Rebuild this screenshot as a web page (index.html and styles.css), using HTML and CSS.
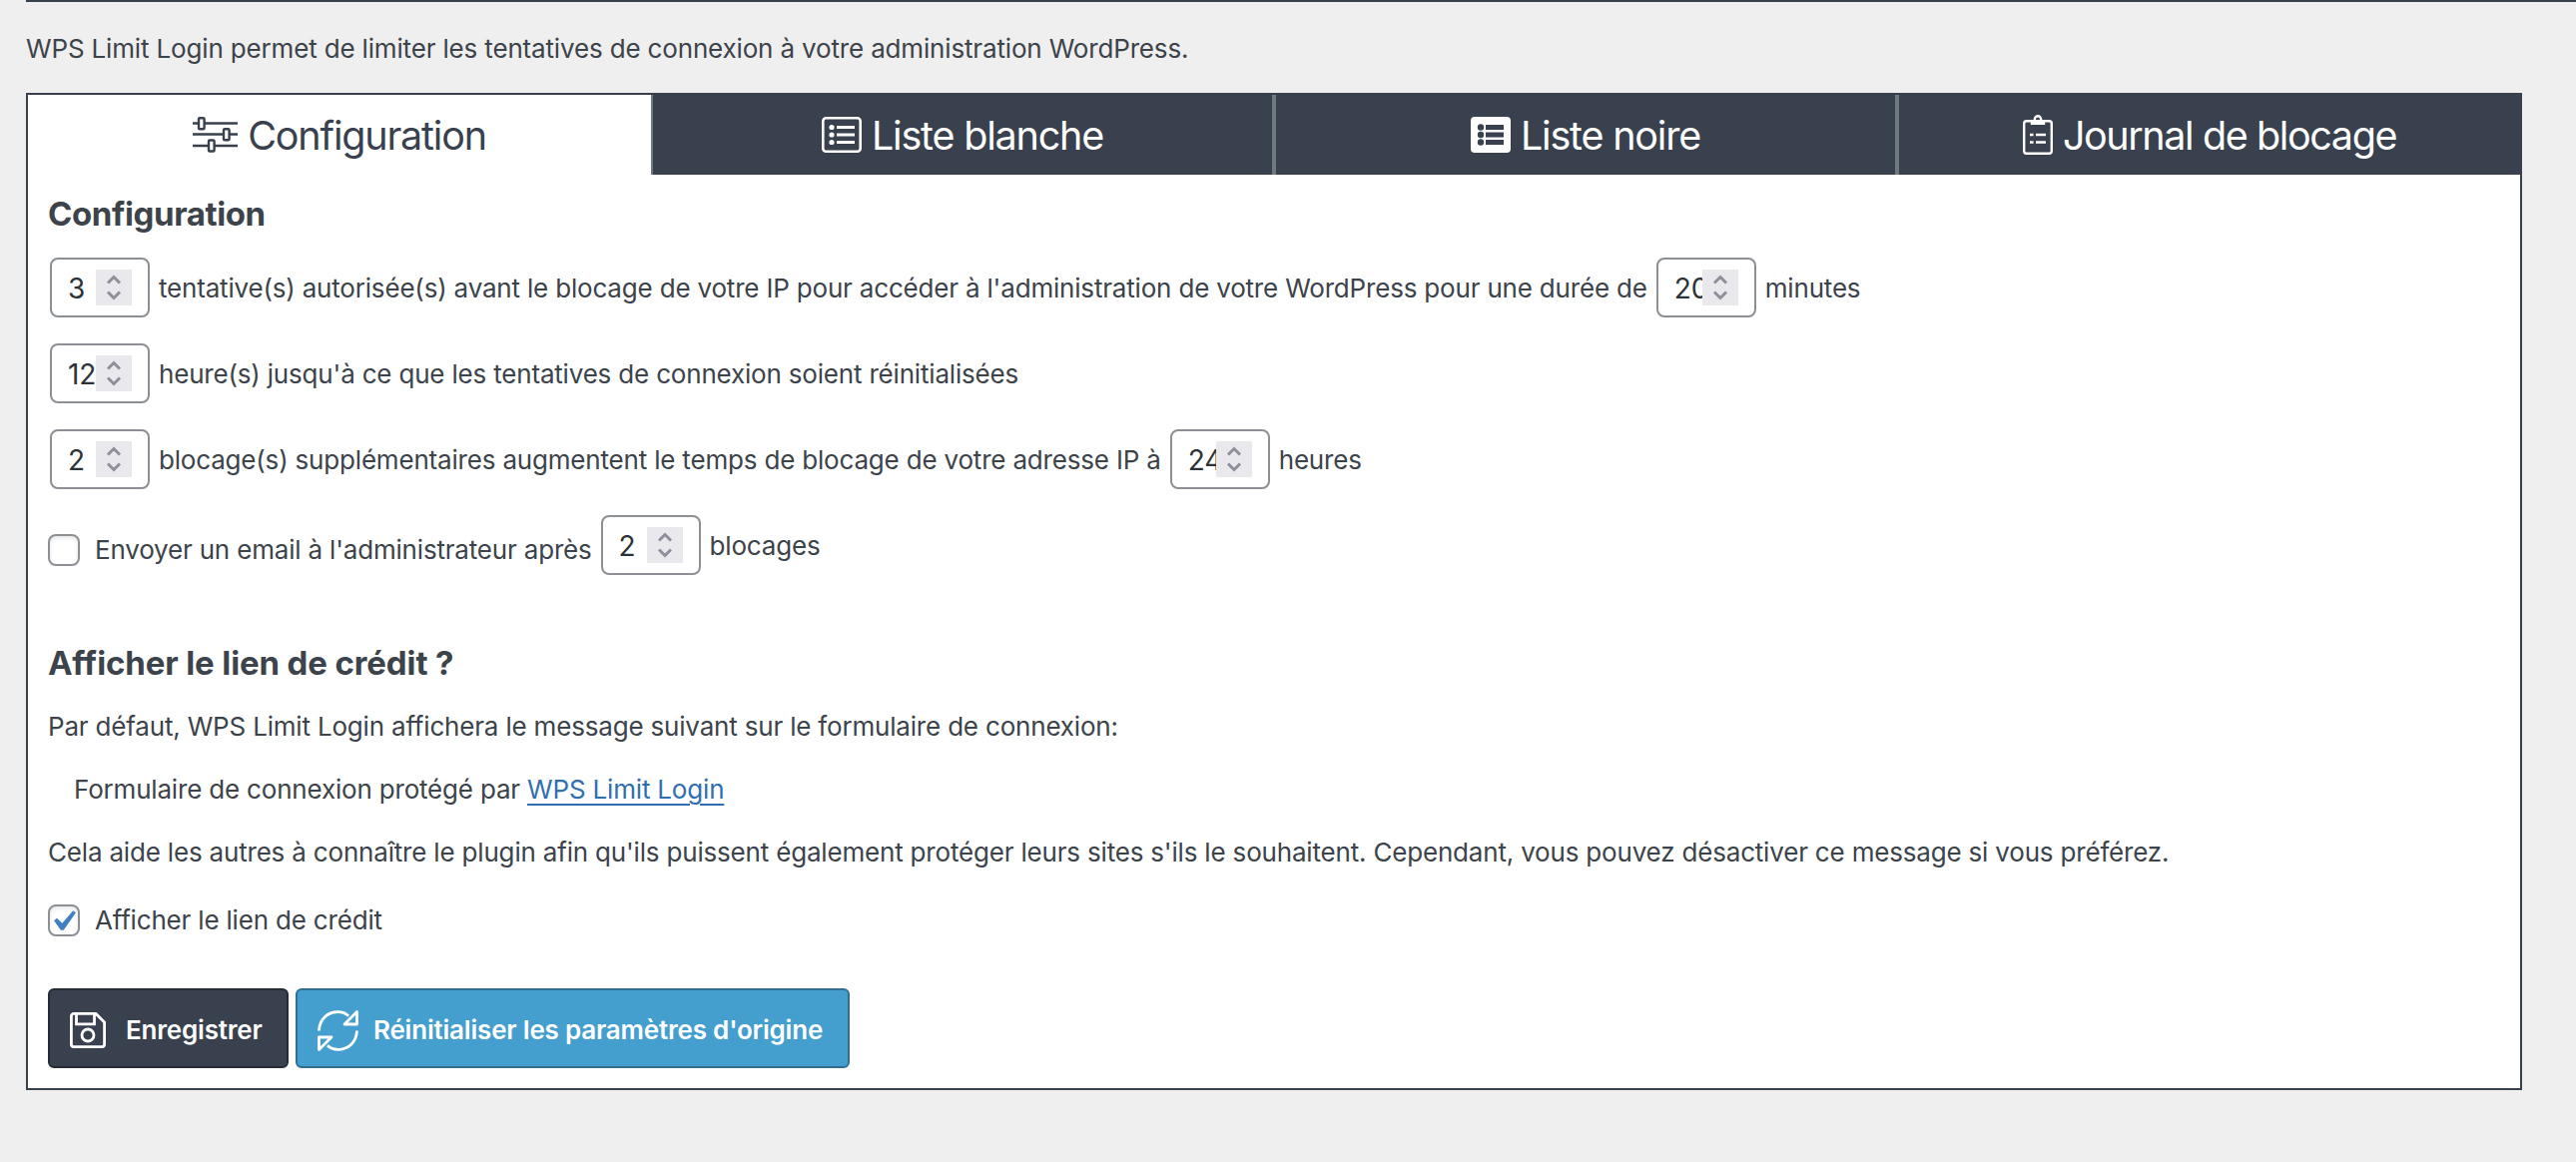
FILE: index.html
```html
<!DOCTYPE html>
<html lang="fr">
<head>
<meta charset="utf-8">
<title>WPS Limit Login</title>
<link rel="stylesheet" href="styles.css">
</head>
<body>
<svg class="defs" aria-hidden="true">
  <symbol id="spin" viewBox="0 0 36 36"><rect width="36" height="36" fill="#e9e8ed"/><path d="M12 13.500l6-6 6 6M12 22.500l6 6 6-6" fill="none" stroke="#8f8e9b" stroke-width="3"/></symbol>
</svg>
<main class="page">
  <p class="intro">WPS Limit Login permet de limiter les tentatives de connexion à votre administration WordPress.</p>
  <section class="panel">
    <nav class="tabs">
      <a class="tab active"><svg class="ic-config" viewBox="0 0 45 36" fill="none" stroke="currentColor" stroke-width="2.400"><path d="M0 6.500h6M12 6.500h33M0 17.500h31M37 17.500h8M0 29h16M22 29h23"/><rect x="6" y="1.200" width="5.600" height="11" rx="1"/><rect x="31" y="12.200" width="5.600" height="11" rx="1"/><rect x="16" y="23.500" width="5.600" height="11" rx="1"/></svg><span>Configuration</span></a>
      <a class="tab"><svg class="ic-list" viewBox="0 0 40 36"><rect x="1.300" y="1.300" width="37.400" height="33.400" rx="3" fill="none" stroke="currentColor" stroke-width="2.600"/><path d="M15 10.500h18M15 18h18M15 25.500h18" stroke="currentColor" stroke-width="3"/><g fill="currentColor"><circle cx="10" cy="10.500" r="2.600"/><circle cx="10" cy="18" r="2.600"/><circle cx="10" cy="25.500" r="2.600"/></g></svg><span>Liste blanche</span></a>
      <a class="tab"><svg class="ic-list" viewBox="0 0 40 36"><rect width="40" height="36" rx="4" fill="currentColor"/><g fill="#38414d"><path d="M15 8h18v5H15zM15 15.500h18v5H15zM15 23h18v5H15z"/><circle cx="10" cy="10.500" r="3.200"/><circle cx="10" cy="18" r="3.200"/><circle cx="10" cy="25.500" r="3.200"/></g></svg><span>Liste noire</span></a>
      <a class="tab journal"><svg class="ic-clip" viewBox="0 0 30 40" fill="none" stroke="currentColor" stroke-width="2.400"><rect x="1.200" y="6.200" width="27.600" height="32.600" rx="2.500"/><path d="M9 6.500v2.300h12V6.500z" fill="currentColor"/><circle cx="15" cy="4.500" r="3.200"/><path d="M13 20h10M13 27.500h10M7 20h3.600M7 27.500h3.600"/></svg><span>Journal de blocage</span></a>
    </nav>
    <form class="content">
      <h2 class="title first">Configuration</h2>
      <div class="row"><span class="num"><span class="val">3</span><svg class="spin"><use href="#spin"/></svg></span><span class="txt">tentative(s) autorisée(s) avant le blocage de votre IP pour accéder à l'administration de votre WordPress pour une durée de</span><span class="num"><span class="val">20</span><svg class="spin"><use href="#spin"/></svg></span><span class="txt">minutes</span></div>
      <div class="row"><span class="num"><span class="val">12</span><svg class="spin"><use href="#spin"/></svg></span><span class="txt">heure(s) jusqu'à ce que les tentatives de connexion soient réinitialisées</span></div>
      <div class="row"><span class="num"><span class="val">2</span><svg class="spin"><use href="#spin"/></svg></span><span class="txt">blocage(s) supplémentaires augmentent le temps de blocage de votre adresse IP à</span><span class="num"><span class="val">24</span><svg class="spin"><use href="#spin"/></svg></span><span class="txt">heures</span></div>
      <div class="row mail"><label class="option"><span class="check"></span><span>Envoyer un email à l'administrateur après</span></label><span class="num"><span class="val">2</span><svg class="spin"><use href="#spin"/></svg></span><span class="txt">blocages</span></div>
      <h2 class="title credit">Afficher le lien de crédit ?</h2>
      <p class="para">Par défaut, WPS Limit Login affichera le message suivant sur le formulaire de connexion:</p>
      <p class="para indent">Formulaire de connexion protégé par <a class="link">WPS Limit Login</a></p>
      <p class="para">Cela aide les autres à connaître le plugin afin qu'ils puissent également protéger leurs sites s'ils le souhaitent. Cependant, vous pouvez désactiver ce message si vous préférez.</p>
      <label class="option show"><span class="check"><svg class="tick" viewBox="0 0 20 20"><path d="M14.830 4.890l1.340.940-5.810 8.380H9.020L5.780 9.670l1.340-1.250 2.570 2.400z" fill="#3f7fc2"/></svg></span><span>Afficher le lien de crédit</span></label>
      <div class="actions">
        <button type="button" class="btn save"><svg class="ic-save" viewBox="0 0 36 36" fill="none" stroke="currentColor" stroke-width="2.800"><path d="M4 1.400h22l8.600 8.600V32a2.600 2.600 0 0 1-2.600 2.600H4A2.600 2.600 0 0 1 1.400 32V4A2.600 2.600 0 0 1 4 1.400z"/><path d="M6.500 2v9.800h18V2"/><circle cx="18" cy="23" r="6"/></svg><span>Enregistrer</span></button>
        <button type="button" class="btn reset"><svg class="ic-sync" viewBox="0 0 41 41" fill="none" stroke="currentColor" stroke-width="2.800" stroke-linejoin="round"><path d="M1.500 20.500C2 9 10 1.700 20.500 1.700c4.500 0 8 1.500 10.500 4M39.500 20.500C39 32 31 39.300 20.500 39.300c-4.500 0-8-1.500-10.500-4"/><path d="M39.500 1.500V14H27zM1.500 39.500V27H14z"/></svg><span>Réinitialiser les paramètres d'origine</span></button>
      </div>
    </form>
  </section>
</main>
</body>
</html>
```
FILE: styles.css
```css
* { box-sizing: border-box; }
body { margin: 0; background: #efefef; color: #3c434a; font: 26px/40px Inter, "Liberation Sans", sans-serif; letter-spacing: -0.185px; }
.defs { position: absolute; width: 0; height: 0; }
.page { min-height: 1164px; margin-left: 26px; border-top: 2px solid #38414d; padding-top: 27px; }
.intro { margin: 0 0 24px; height: 40px; white-space: nowrap; letter-spacing: -0.16px; }
.panel { width: 2500px; height: 999px; border: 2px solid #38414d; background: #fff; }
.tabs { display: grid; grid-template-columns: 626px 624px 624px 622px; height: 80px; }
.tab { display: flex; align-items: center; justify-content: center; gap: 10px; background: #38414d; color: #fff; font-size: 39.5px; letter-spacing: -1.2px; border-right: 4px solid #6f7980; white-space: nowrap; }
.tab span { padding-top: 2px; }
.tab.active { background: #fff; color: #38414d; border-right-width: 2px; }
.tab.journal { border-right: 0; letter-spacing: -1.4px; }
.ic-config { width: 45px; height: 36px; }
.ic-list { width: 40px; height: 36px; }
.ic-clip { width: 30px; height: 40px; }
.content { padding: 18px 20px 0; }
.title { margin: 0; font-size: 33px; line-height: 42px; font-weight: 650; letter-spacing: -0.12px; }
.first { margin-bottom: 23px; letter-spacing: -0.4px; }
.row { display: flex; align-items: center; height: 60px; margin: 0 2px 26px; gap: 9px; white-space: nowrap; }
.num { display: flex; align-items: center; width: 100px; height: 60px; border: 2px solid #8c8f94; border-radius: 8px; padding-left: 16px; color: #2c3338; font-size: 28px; flex: none; }
.val { width: 28px; overflow: hidden; padding-top: 2px; }
.txt { padding-top: 2px; }
.spin { width: 36px; height: 36px; flex: none; }
.option { display: flex; align-items: center; gap: 15px; }
.check { display: flex; align-items: flex-start; width: 32px; height: 32px; border: 2px solid #8c8f94; border-radius: 8px; background: #fff; box-shadow: inset 0 2px 4px rgba(0,0,0,.1); }
.tick { width: 42px; height: 42px; flex: none; margin: -6px 0 0 -8px; }
.mail { margin-left: 0; }
.mail .option { padding-top: 10px; }
.credit { margin: 67px 0 23px; }
.para { margin: 0 0 23px; white-space: nowrap; }
.indent { padding-left: 26px; }
.link { color: #2f6fb0; text-decoration: underline; text-decoration-thickness: 2px; text-underline-offset: 5px; }
.show { height: 40px; margin-top: 28px; }
.actions { display: flex; gap: 7px; margin-top: 48px; }
.btn { display: flex; align-items: center; height: 80px; border: 2px solid; border-radius: 6px; color: #fff; font: 600 26px/40px Inter, sans-serif; letter-spacing: -0.2px; white-space: nowrap; padding: 4px 0 0 20px; }
.save { width: 241px; background: #38414d; border-color: #262c34; gap: 20px; }
.reset { width: 555px; background: #449ece; border-color: #316f91; gap: 15px; }
.ic-save { width: 36px; height: 36px; }
.ic-sync { width: 41px; height: 41px; }
```
